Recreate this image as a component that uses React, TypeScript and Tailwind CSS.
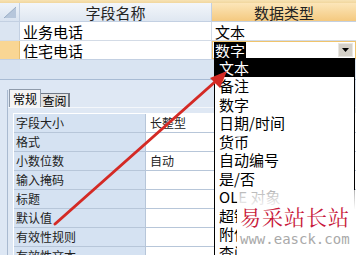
import React from "react";

const props = [
  { label: "字段大小", value: "长整型" },
  { label: "格式", value: "" },
  { label: "小数位数", value: "自动" },
  { label: "输入掩码", value: "" },
  { label: "标题", value: "" },
  { label: "默认值", value: "" },
  { label: "有效性规则", value: "" },
  { label: "有效性文本", value: "" },
];

const types = [
  "文本",
  "备注",
  "数字",
  "日期/时间",
  "货币",
  "自动编号",
  "是/否",
  "OLE 对象",
  "超链接",
  "附件",
  "查阅向导",
];

export default function App() {
  return (
    <div className="relative w-[356px] h-[255px] overflow-hidden bg-[#dde7f4] text-black font-['Noto_Sans_CJK_SC',sans-serif]">
      {/* top strip */}
      <div className="h-[3px] bg-gradient-to-b from-[#f7e2b4] to-[#f1d79e]" />

      {/* header */}
      <div className="flex h-[19px] border-b border-[#c3d0e2]">
        <div className="w-[20px] bg-gradient-to-b from-[#eef3f9] to-[#d9e3f0] border-r border-[#c3d0e2] flex items-center justify-center">
          <svg width="14" height="13" viewBox="0 0 14 13">
            <polygon points="1,12 13,1 13,12" fill="#b6c6db" />
            <line x1="1" y1="12" x2="13" y2="1" stroke="#9aaec6" strokeWidth="1" />
          </svg>
        </div>
        <div className="w-[192px] bg-gradient-to-b from-[#f3f6fa] to-[#dfe7f1] border-r border-[#c3d0e2] flex items-center justify-center text-[15px] leading-none text-[#222]">
          字段名称
        </div>
        <div className="flex-1 bg-gradient-to-b from-[#fce6b9] to-[#f4c97f] flex items-center justify-center text-[15px] leading-none text-[#222]">
          数据类型
        </div>
      </div>

      {/* row 1 */}
      <div className="flex h-[19px] border-b border-[#d3dbe6]">
        <div className="w-[20px] bg-[#dbe5f2] border-r border-[#c3d0e2]" />
        <div className="w-[192px] bg-white border-r border-[#d3dbe6] flex items-center pl-[3px] text-[15px] leading-none">
          业务电话
        </div>
        <div className="flex-1 bg-white flex items-center pl-[3px] text-[15px] leading-none">文本</div>
      </div>

      {/* row 2 */}
      <div className="flex h-[19px] border-b border-[#c3d0e2]">
        <div className="w-[20px] bg-[#f9d694] border-r border-[#e8bf70]" />
        <div className="w-[192px] bg-white border-r border-[#d3dbe6] flex items-center pl-[3px] text-[15px] leading-none">
          住宅电话
        </div>
        <div className="flex-1 bg-white border border-[#f0c46c] flex items-center pl-[1px] pr-[2px]">
          <span className="bg-black text-white text-[15px] leading-none px-[1px] py-[1px]">数字</span>
          <div className="ml-auto w-[15px] h-[14px] bg-[#d4d0c8] border border-[#e8e6e1] flex items-center justify-center">
            <svg width="7" height="4" viewBox="0 0 7 4">
              <polygon points="0,0 7,0 3.5,4" fill="#000" />
            </svg>
          </div>
        </div>
      </div>

      {/* blank band */}
      <div className="h-[19px] flex">
        <div className="w-[20px] bg-[#d6e1f0]" />
        <div className="flex-1 bg-[#d9e4f2]" />
      </div>
      <div className="h-px bg-[#a8bbd4]" />

      {/* property panel */}
      <div className="pt-[10px] pl-[7px]">
        <div className="border-l border-[#a9bad0] bg-[#dfe8f4]">
          <div className="flex items-end h-[18px] pl-[1px] border-b border-[#f4f7fb]">
            <div className="h-[18px] w-[32px] bg-[#f4f4f4] border border-b-0 border-[#8f9bab] flex items-center justify-center text-[12px] leading-none">
              常规
            </div>
            <div className="h-[14px] w-[29px] bg-[#e3e3e3] border-t border-r-2 border-[#6f7784] flex items-center justify-center text-[12px] leading-none">
              查阅
            </div>
          </div>
          <div className="pl-[5px] pt-[5px]">
            <div className="border-t border-l border-[#ffffff]">
              {props.map((p) => (
                <div key={p.label} className="flex h-[19px] border-b border-[#b7c6d9]">
                  <div className="w-[132px] bg-[#d5e2f2] border-r border-[#b7c6d9] flex items-center pl-[2px] text-[12px] leading-none text-[#222]">
                    {p.label}
                  </div>
                  <div className="flex-1 bg-white flex items-center pl-[4px] text-[12px] leading-none text-[#222]">
                    {p.value}
                  </div>
                </div>
              ))}
            </div>
          </div>
        </div>
      </div>

      {/* dropdown list */}
      <div className="absolute left-[214px] top-[58px] w-[141px] h-[210px] bg-white border-l border-r border-black">
        {types.map((t, i) => (
          <div
            key={t}
            className={
              i === 0
                ? "h-[18.5px] flex items-center pl-[4px] bg-black text-white text-[15px] leading-none"
                : "h-[18.5px] flex items-center pl-[4px] text-[15px] leading-none"
            }
          >
            {t}
          </div>
        ))}
      </div>

      {/* watermark */}
      <div className="absolute left-[237px] top-[190px] w-[119px] h-[65px] bg-gradient-to-b from-white/70 via-white via-30% to-white flex flex-col items-start pl-[3px] pt-[16px]">
        <span className="text-[21px] leading-none text-[#c8183a] font-['Noto_Serif_CJK_SC','Noto_Sans_CJK_SC',serif] tracking-[1px]">
          易采站长站
        </span>
        <span className="mt-[5px] text-[14px] leading-none text-[#a9a9a9] font-['DejaVu_Sans_Mono',monospace]">
          www.easck.com
        </span>
      </div>

      {/* red arrow */}
      <svg className="absolute left-0 top-0 pointer-events-none" width="356" height="255" viewBox="0 0 356 255">
        <line x1="55" y1="224" x2="216" y2="81" stroke="#d42a25" strokeWidth="3" strokeLinecap="round" />
        <polygon points="227,71 210,78 220,88" fill="#d42a25" />
      </svg>
    </div>
  );
}
